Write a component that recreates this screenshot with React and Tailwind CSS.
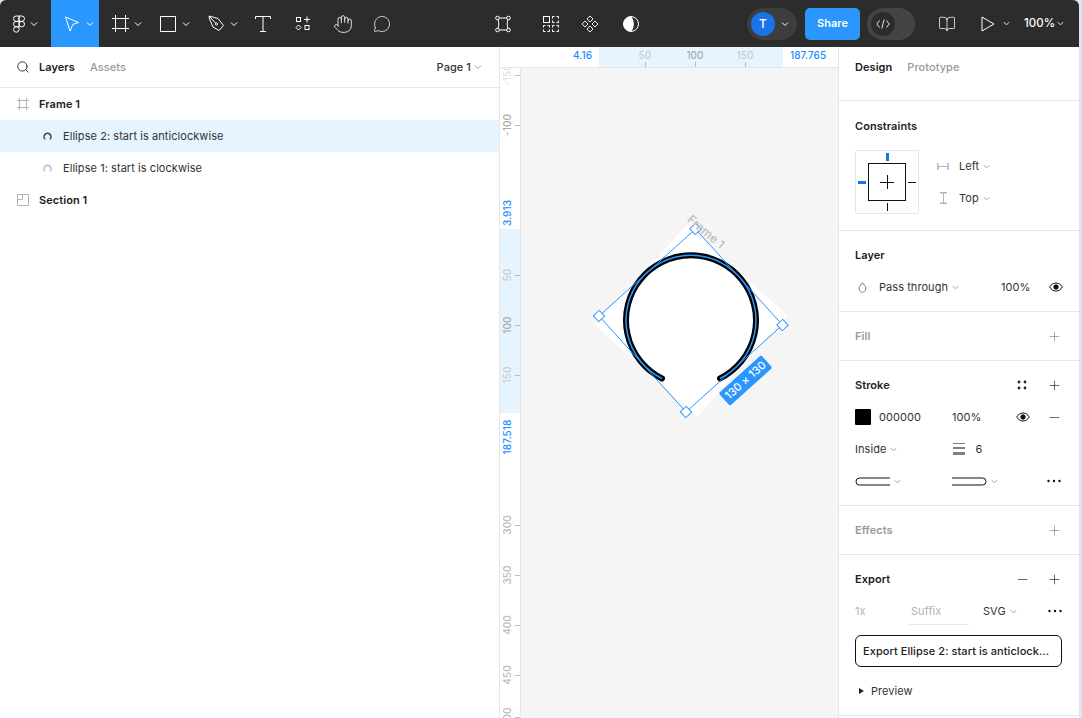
import { Search, Hand, MessageCircle, BookOpen, Plus, Minus } from "lucide-react";

const Chev = ({ className = "text-white", size = 10 }) => (
    <svg width={size} height={size} viewBox="0 0 10 10" fill="none" stroke="currentColor" strokeWidth="1" className={className}>
        <path d="M2 3.500 5 6.500l3-3" />
    </svg>
);

const GrayChev = () => <Chev className="text-[#999] ml-[3px]" size={9} />;

const MoveIcon = () => (
    <svg width="16" height="16" viewBox="0 0 16 16" fill="none" stroke="#fff" strokeWidth="1">
        <path d="M1.500 1 14.500 6.500 8.800 8.500 6 15z" strokeLinejoin="round" />
    </svg>
);

const FigmaLogo = () => (
    <svg width="12" height="18" viewBox="0 0 12 18" fill="none" stroke="#fff" strokeWidth="1">
        <path d="M6 1H3.200a2.700 2.700 0 0 0 0 5.400H6zM6 1h2.800a2.700 2.700 0 0 1 0 5.400H6zM6 6.400H3.200a2.700 2.700 0 0 0 0 5.400H6zM6 11.800H3.200A2.700 2.700 0 1 0 6 14.500zM11.500 9.100a2.700 2.700 0 1 1-5.500 0 2.700 2.700 0 0 1 5.500 0z" />
    </svg>
);

const FrameIcon = ({ size = 17, color = "#fff" }) => (
    <svg width={size} height={size} viewBox="0 0 17 17" fill="none" stroke={color} strokeWidth={size < 17 ? 1.400 : 1}>
        <path d="M0 3.500h17M0 13.500h17M3.500 0v17M13.500 0v17" />
    </svg>
);

const RectIcon = () => (
    <svg width="16" height="16" viewBox="0 0 16 16" fill="none" stroke="#fff" strokeWidth="1">
        <rect x="0.500" y="0.500" width="15" height="15" />
    </svg>
);

const PenIcon = () => (
    <svg width="17" height="17" viewBox="0 0 17 17" fill="none" stroke="#fff" strokeWidth="1">
        <path d="M1 1 10 3.500 15.500 10.500 11 15.500 5 12 1.500 4z" strokeLinejoin="round" />
        <path d="M1 1l6.500 7" />
        <circle cx="8.500" cy="9" r="1.100" />
    </svg>
);

const TextIcon = () => (
    <svg width="16" height="16" viewBox="0 0 16 16" fill="none" stroke="#fff" strokeWidth="1">
        <path d="M.5 3V.5h15V3M8 .5v15M5 15.500h6" />
    </svg>
);

const ComponentsIcon = () => (
    <svg width="16" height="16" viewBox="0 0 16 16" fill="none" stroke="#fff" strokeWidth="1">
        <rect x="1.500" y="1.500" width="4" height="4" />
        <path d="M12 .5v6M9 3.500h6" />
        <path d="M3.500 9 6 11.500 3.500 14 1 11.500z" />
        <rect x="10" y="9.500" width="4" height="4" />
    </svg>
);

const VectorEditIcon = () => (
    <svg width="16" height="18" viewBox="0 0 16 18" fill="none" stroke="#fff" strokeWidth="1">
        <path d="M4 3h8M4 15h8M3 4.500c1 3 1 6 0 9M13 4.500c-1 3-1 6 0 9" />
        <circle cx="2.500" cy="3" r="1.800" />
        <circle cx="13.500" cy="3" r="1.800" />
        <circle cx="2.500" cy="15" r="1.800" />
        <circle cx="13.500" cy="15" r="1.800" />
    </svg>
);

const ComponentSetIcon = () => (
    <svg width="16" height="16" viewBox="0 0 16 16" fill="none" stroke="#fff" strokeWidth="1">
        <rect x="0.500" y="0.500" width="6" height="6" />
        <path d="M9.500.5h2M13.500.5h2v2M15.500 4.500v2h-2M11.500 6.500h-2v-2M9.500 2.500v-2" />
        <path d="M.5 9.500h2M4.500 9.500h2v2M6.500 13.500v2h-2M2.500 15.500h-2v-2M.5 11.500v-2" />
        <path d="M9.500 9.500h2M13.500 9.500h2v2M15.500 13.500v2h-2M11.500 15.500h-2v-2M9.500 11.500v-2" />
    </svg>
);

const DiamondsIcon = () => (
    <svg width="18" height="18" viewBox="0 0 18 18" fill="none" stroke="#fff" strokeWidth="0.900">
        <path d="M9 1l3 3-3 3-3-3zM9 11l3 3-3 3-3-3zM4 6l3 3-3 3-3-3zM14 6l3 3-3 3-3-3z" />
    </svg>
);

const ContrastIcon = () => (
    <svg width="16" height="16" viewBox="0 0 16 16">
        <circle cx="8" cy="8" r="7.500" fill="none" stroke="#fff" strokeWidth="1" />
        <path d="M8 .5a7.500 7.500 0 0 0 0 15c2-2 2.800-4.500 2.800-7.500S10 2.500 8 .5z" fill="#fff" />
    </svg>
);

const PlayIcon = () => (
    <svg width="14" height="16" viewBox="0 0 14 16" fill="none" stroke="#fff" strokeWidth="1">
        <path d="M1 1v14l12-7z" strokeLinejoin="round" />
    </svg>
);

const CodeGlyph = () => (
    <svg width="14" height="10" viewBox="0 0 14 10" fill="none" stroke="#e6e6e6" strokeWidth="1">
        <path d="M3.500 1.500 .8 5l2.700 3.500M10.500 1.500 13.200 5l-2.700 3.500M8.200.5 5.800 9.500" />
    </svg>
);

const EllipseGlyph = ({ color }) => (
    <svg width="9" height="8" viewBox="0 0 9 8" fill="none" stroke={color} strokeWidth="1.500">
        <path d="M2 7.300A3.500 3.500 0 1 1 7 7.300" />
    </svg>
);

const SectionIcon = () => (
    <svg width="12" height="12" viewBox="0 0 12 12" fill="none" stroke="#b3b3b3" strokeWidth="1">
        <path d="M.5.500h11v11H.5zM.5 5.500h5v-5" />
    </svg>
);

const Drop = () => (
    <svg width="9" height="11" viewBox="0 0 9 11" fill="none" stroke="#777" strokeWidth="1">
        <path d="M4.500.800 7 3.800c1.800 2.400.6 6.500-2.500 6.500S.2 6.200 2 3.800z" />
    </svg>
);

const EyeIcon = () => (
    <svg width="14" height="10" viewBox="0 0 14 10" fill="none" stroke="#111" strokeWidth="1">
        <path d="M.7 5C2.300 2.300 4.500 1 7 1s4.700 1.300 6.300 4C11.700 7.700 9.500 9 7 9S2.300 7.700.7 5z" />
        <circle cx="7" cy="5" r="2.200" fill="#111" />
    </svg>
);

const Dots = () => (
    <svg width="16" height="4" viewBox="0 0 16 4" fill="#111">
        <circle cx="2.500" cy="2" r="1.200" />
        <circle cx="8" cy="2" r="1.200" />
        <circle cx="13.500" cy="2" r="1.200" />
    </svg>
);

const StyleDots = () => (
    <svg width="10" height="10" viewBox="0 0 10 10" fill="#222">
        <circle cx="2" cy="2" r="1.400" />
        <circle cx="8" cy="2" r="1.400" />
        <circle cx="2" cy="8" r="1.400" />
        <circle cx="8" cy="8" r="1.400" />
    </svg>
);

const WeightIcon = () => (
    <svg width="12" height="12" viewBox="0 0 12 12" fill="#808080">
        <rect y="0" width="12" height="1" />
        <rect y="4" width="12" height="2" />
        <rect y="9" width="12" height="3" />
    </svg>
);

const CapStart = () => (
    <svg width="35" height="9" viewBox="0 0 35 9" fill="none" stroke="#111" strokeWidth="1">
        <path d="M35 1H4.500a3.500 3.500 0 0 0 0 7H35" />
    </svg>
);

const CapEnd = () => (
    <svg width="35" height="9" viewBox="0 0 35 9" fill="none" stroke="#111" strokeWidth="1">
        <path d="M0 1h30.500a3.500 3.500 0 0 1 0 7H0" />
    </svg>
);

const HConstraint = () => (
    <svg width="12" height="7" viewBox="0 0 12 7" fill="none" stroke="#b3b3b3" strokeWidth="1.500">
        <path d="M.8 0v7M11.200 0v7" />
        <path d="M1 3.500h10" strokeWidth="1" />
    </svg>
);

const VConstraint = () => (
    <svg width="7" height="12" viewBox="0 0 7 12" fill="none" stroke="#b3b3b3" strokeWidth="1.500">
        <path d="M0 .8h7M0 11.200h7" />
        <path d="M3.500 1v10" strokeWidth="1" />
    </svg>
);

const ConstraintBox = () => (
    <div className="w-16 h-16 border border-[#e6e6e6] rounded-[2px] shrink-0">
        <svg width="62" height="62" viewBox="1 1 62 62" fill="none" stroke="#111" strokeWidth="1">
            <rect x="13.500" y="13.500" width="37" height="37" />
            <path d="M25 32.500h14M32.500 25v14M53 32.500h8M32.500 53v8" />
            <path d="M32.500 3v8M3 32.500h8" stroke="#1a73e8" strokeWidth="3" />
        </svg>
    </div>
);

function ToolBtn({ children, active = false }) {
    return (
        <div className={`h-full w-12 flex items-center pl-[9px] ${active ? "bg-[#2a97fe]" : ""}`}>
            <div className="w-6 flex justify-center">{children}</div>
            <Chev className="text-white ml-px" />
        </div>
    );
}

const IconBtn = ({ children, className = "" }) => (
    <div className={`w-10 h-full flex items-center justify-center ${className}`}>{children}</div>
);

function TopBar() {
    return (
        <div className="h-[47px] shrink-0 bg-[#2c2c2c] flex items-center text-white rounded-t-[6px]">
            <div className="h-full w-[51px] flex items-center pl-[7px]">
                <div className="w-6 flex justify-center"><FigmaLogo /></div>
                <Chev className="text-white ml-[-2px]" />
            </div>
            <ToolBtn active><MoveIcon /></ToolBtn>
            <ToolBtn><FrameIcon /></ToolBtn>
            <ToolBtn><RectIcon /></ToolBtn>
            <ToolBtn><PenIcon /></ToolBtn>
            <IconBtn><TextIcon /></IconBtn>
            <IconBtn><ComponentsIcon /></IconBtn>
            <IconBtn><Hand size={20} strokeWidth={1} /></IconBtn>
            <IconBtn className="ml-[-1px]"><MessageCircle size={18} strokeWidth={1} /></IconBtn>

            <IconBtn className="ml-[81px]"><VectorEditIcon /></IconBtn>
            <IconBtn className="ml-2"><ComponentSetIcon /></IconBtn>
            <IconBtn className="ml-[-1px]"><DiamondsIcon /></IconBtn>
            <IconBtn className="ml-px"><ContrastIcon /></IconBtn>

            <div className="ml-24 h-8 w-[50px] rounded-full bg-[#3d3d3d] flex items-center pl-1">
                <div className="w-6 h-6 rounded-full bg-[#1a73e8] flex items-center justify-center text-[12px] font-medium">T</div>
                <Chev className="text-white ml-[5px]" />
            </div>
            <div className="ml-2 h-8 w-[55px] rounded-[5px] bg-[#2a97fe] flex items-center justify-center text-[11px] font-semibold">Share</div>
            <div className="ml-[7px] h-8 w-12 rounded-full bg-[#444] flex items-center pl-1">
                <div className="w-6 h-6 rounded-full bg-[#2c2c2c] flex items-center justify-center"><CodeGlyph /></div>
            </div>
            <IconBtn className="ml-3"><BookOpen size={18} strokeWidth={1} /></IconBtn>
            <div className="flex items-center ml-[14px]">
                <PlayIcon />
                <Chev className="text-white ml-[7px]" size={9} />
            </div>
            <div className="ml-[13px] text-[11.500px] font-medium leading-none">100%</div>
            <Chev className="text-white ml-px" size={9} />
        </div>
    );
}

function LayerRow({ children, className = "" }) {
    return <div className={`h-8 flex items-center text-[11px] text-[#333] ${className}`}>{children}</div>;
}

function LeftPanel() {
    return (
        <div className="w-[500px] shrink-0 border-r border-[#e6e6e6] bg-white">
            <div className="h-[41px] border-b border-[#e6e6e6] flex items-center pl-[16px] pr-[16px] text-[11px]">
                <Search size={14} strokeWidth={1.500} className="text-[#222]" />
                <span className="ml-[9px] font-semibold text-[#222]">Layers</span>
                <span className="ml-[15px] font-medium text-[#999]">Assets</span>
                <span className="ml-auto text-[#333] font-medium">Page 1</span>
                <Chev className="text-[#999] ml-0.5" />
            </div>
            <LayerRow className="pl-[17px]">
                <FrameIcon size={12} color="#b3b3b3" />
                <span className="ml-[10px] font-semibold text-[#222]">Frame 1</span>
            </LayerRow>
            <LayerRow className="pl-[43px] bg-[#e5f4ff]">
                <EllipseGlyph color="#444" />
                <span className="ml-[11px]">Ellipse 2: start is anticlockwise</span>
            </LayerRow>
            <LayerRow className="pl-[43px]">
                <EllipseGlyph color="#bbb" />
                <span className="ml-[11px]">Ellipse 1: start is clockwise</span>
            </LayerRow>
            <LayerRow className="pl-[17px]">
                <SectionIcon />
                <span className="ml-[10px] font-semibold text-[#222]">Section 1</span>
            </LayerRow>
        </div>
    );
}

const hTicks = [
    { x: 124, label: "50", color: "text-[#ccc]" },
    { x: 174, label: "100", color: "text-[#aaa]" },
    { x: 224, label: "150", color: "text-[#ccc]" },
];

const vTicks = [
    { y: 7, label: "-150", color: "text-[#e0e0e0]" },
    { y: 57, label: "-100", color: "text-[#aaa]" },
    { y: 207, label: "50", color: "text-[#ccc]" },
    { y: 257, label: "100", color: "text-[#aaa]" },
    { y: 307, label: "150", color: "text-[#ccc]" },
    { y: 457, label: "300", color: "text-[#bbb]" },
    { y: 507, label: "350", color: "text-[#bbb]" },
    { y: 557, label: "400", color: "text-[#bbb]" },
    { y: 607, label: "450", color: "text-[#bbb]" },
    { y: 649, label: "500", color: "text-[#bbb]" },
];

function TopRuler() {
    return (
        <div className="h-[21px] shrink-0 border-b border-[#e6e6e6] bg-white relative text-[10px] font-medium overflow-hidden">
            <div className="absolute left-[99px] w-[184px] top-0 bottom-0 bg-[#e5f4ff]" />
            <span className="absolute top-[1px] left-[73px] text-[#1a8cff]">4.16</span>
            <span className="absolute top-[1px] left-[290px] text-[#1a8cff]">187.765</span>
            {hTicks.map((t) => (
                <div key={t.label}>
                    <span className={`absolute top-[1px] -translate-x-1/2 ${t.color}`} style={{ left: t.x + 21 }}>{t.label}</span>
                    <div className="absolute bottom-0 h-[5px] w-px bg-[#bbb]" style={{ left: t.x + 21 }} />
                </div>
            ))}
        </div>
    );
}

function LeftRuler() {
    return (
        <div className="w-[21px] shrink-0 border-r border-[#e6e6e6] bg-white relative text-[10px] font-medium overflow-hidden">
            <div className="absolute left-0 right-0 top-[161px] h-[184px] bg-[#e5f4ff]" />
            <span className="absolute left-[7px] top-[145px] -translate-x-1/2 -translate-y-1/2 -rotate-90 text-[#1a8cff]">3.913</span>
            <span className="absolute left-[7px] top-[369px] -translate-x-1/2 -translate-y-1/2 -rotate-90 text-[#1a8cff] whitespace-nowrap">187.518</span>
            {vTicks.map((t) => (
                <div key={t.label}>
                    <span className={`absolute left-[7px] -translate-x-1/2 -translate-y-1/2 -rotate-90 ${t.color}`} style={{ top: t.y }}>{t.label}</span>
                    <div className="absolute right-0 w-[5px] h-px bg-[#bbb]" style={{ top: t.y }} />
                </div>
            ))}
        </div>
    );
}

const handles = [[695.5, 229], [599, 316], [686, 412], [782.5, 325]];

function Canvas() {
    return (
        <div className="flex-1 bg-[#f5f5f5] relative overflow-hidden">
            {/* viewBox uses page coordinates, the canvas starts at 521,68 */}
            <svg width="317" height="650" viewBox="521 68 317 650" className="absolute left-0 top-0">
                <polygon points="687,225 595,325 697,417 787,315" fill="#fff" />
                <path d="M662 378.500A65 65 0 1 1 720 378.500" fill="none" stroke="#000" strokeWidth="6" strokeLinecap="round" />
                <path d="M662 378.500A65 65 0 1 1 720 378.500" fill="none" stroke="#2a97fe" strokeWidth="1.500" />
                <polygon points="695.500,229 599,316 686,412 782.500,325" fill="none" stroke="#2a97fe" strokeWidth="1" />
                {handles.map(([x, y]) => (
                    <rect key={x} x={x - 4} y={y - 4} width="8" height="8" fill="#fff" stroke="#2a97fe" strokeWidth="1" transform={`rotate(-42 ${x} ${y})`} />
                ))}
            </svg>
            <span className="absolute left-[185px] top-[156px] -translate-x-1/2 text-[12px] leading-[16px] font-medium text-[#bdbdbd] rotate-[40deg] whitespace-nowrap">Frame 1</span>
            <div className="absolute left-[196px] top-[304px] w-[57px] h-[17px] rounded-[2px] bg-[#2a97fe] text-white text-[11px] font-medium flex items-center justify-center -rotate-[42deg] whitespace-nowrap">130 × 130</div>
        </div>
    );
}

function Section({ children, className = "" }) {
    return <div className={`border-b border-[#e6e6e6] ${className}`}>{children}</div>;
}

function Head({ title, muted = false, children, className = "h-12" }) {
    return (
        <div className={`flex items-center pl-4 pr-[17px] ${className}`}>
            <span className={`text-[11px] font-semibold ${muted ? "text-[#999]" : "text-[#222]"}`}>{title}</span>
            <div className="ml-auto flex items-center">{children}</div>
        </div>
    );
}

const Row = ({ children }) => <div className="h-8 flex items-center pl-4 text-[11px] text-[#333]">{children}</div>;

function RightPanel() {
    return (
        <div className="w-[241px] shrink-0 border-l border-[#e6e6e6] bg-white text-[11px]">
            <Section className="h-[54px] flex items-start pt-[13px] pl-4">
                <span className="font-semibold text-[#222] leading-[14px]">Design</span>
                <span className="ml-[15px] font-medium text-[#999] leading-[14px]">Prototype</span>
            </Section>
            <Section className="pb-4">
                <Head title="Constraints" className="h-[49px] pt-[2px]" />
                <div className="flex pl-4">
                    <ConstraintBox />
                    <div className="ml-[18px]">
                        <div className="h-8 flex items-center text-[#333]">
                            <div className="w-[22px]"><HConstraint /></div>
                            <span>Left</span><GrayChev />
                        </div>
                        <div className="h-8 flex items-center text-[#333]">
                            <div className="w-[22px] pl-[3px]"><VConstraint /></div>
                            <span>Top</span><GrayChev />
                        </div>
                    </div>
                </div>
            </Section>
            <Section className="pb-2">
                <Head title="Layer" className="h-10 pt-2" />
                <Row>
                    <div className="w-6 pl-[3px]"><Drop /></div>
                    <span>Pass through</span><GrayChev />
                    <span className="ml-[41px]">100%</span>
                    <div className="ml-[19px]"><EyeIcon /></div>
                </Row>
            </Section>
            <Section>
                <Head title="Fill" muted><Plus size={15} strokeWidth={1} className="text-[#777]" /></Head>
            </Section>
            <Section className="pb-2">
                <Head title="Stroke" className="h-10 pt-2">
                    <StyleDots />
                    <Plus size={15} strokeWidth={1} className="text-[#111] ml-5" />
                </Head>
                <Row>
                    <div className="w-4 h-4 bg-black rounded-[1px]" />
                    <span className="ml-2 w-[73px]">000000</span>
                    <span className="w-[64px]">100%</span>
                    <EyeIcon />
                    <Minus size={15} strokeWidth={1} className="text-[#111] ml-[17px]" />
                </Row>
                <Row>
                    <span>Inside</span><GrayChev />
                    <div className="ml-[55px]"><WeightIcon /></div>
                    <span className="ml-[10px]">6</span>
                </Row>
                <Row>
                    <CapStart /><GrayChev />
                    <div className="ml-[50px]"><CapEnd /></div><GrayChev />
                    <div className="ml-[47px]"><Dots /></div>
                </Row>
            </Section>
            <Section>
                <Head title="Effects" muted><Plus size={15} strokeWidth={1} className="text-[#777]" /></Head>
            </Section>
            <Section className="pb-2">
                <Head title="Export" className="h-10 pt-2">
                    <Minus size={15} strokeWidth={1} className="text-[#111]" />
                    <Plus size={15} strokeWidth={1} className="text-[#111] ml-[17px]" />
                </Head>
                <Row>
                    <span className="w-[54px] text-[#b3b3b3]">1x</span>
                    <div className="w-[60px] h-[26px] mt-[2px] pl-[2px] border-b border-[#e6e6e6] flex items-center text-[#b3b3b3]">Suffix</div>
                    <span className="ml-[14px]">SVG</span><GrayChev />
                    <div className="ml-[29px]"><Dots /></div>
                </Row>
                <div className="mt-2 ml-4 w-[207px] h-8 rounded-[6px] border border-[#111] flex items-center pl-[7px] text-[11px] font-medium text-[#222]">
                    Export Ellipse 2: start is anticlock...
                </div>
                <div className="mt-2 h-8 flex items-center pl-5 text-[#333]">
                    <svg width="5" height="6" viewBox="0 0 5 6" fill="#222"><path d="M0 0l5 3-5 3z" /></svg>
                    <span className="ml-[7px]">Preview</span>
                </div>
            </Section>
        </div>
    );
}

export default function App() {
    return (
        <div className="w-[1082px] h-[718px] overflow-hidden bg-[#dde5ef] font-['Inter',sans-serif] tracking-[0.06px]">
            <div className="w-[1079px] h-full flex flex-col">
                <TopBar />
                <div className="flex-1 flex min-h-0">
                    <LeftPanel />
                    <div className="flex-1 flex flex-col min-w-0">
                        <TopRuler />
                        <div className="flex-1 flex min-h-0">
                            <LeftRuler />
                            <Canvas />
                        </div>
                    </div>
                    <RightPanel />
                </div>
            </div>
        </div>
    );
}
